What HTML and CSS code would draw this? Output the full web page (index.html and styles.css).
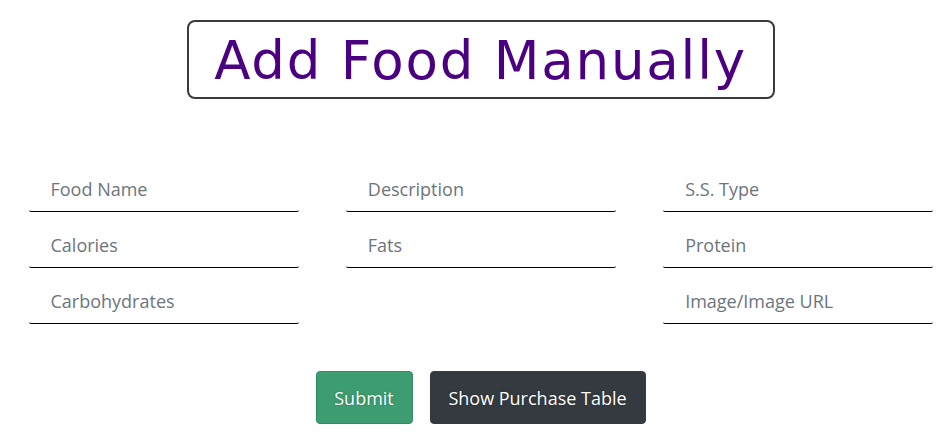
FILE: index.html
```html
<!DOCTYPE html>
<html>
<head>
<meta charset="utf-8">
<link rel="stylesheet" href="styles.css">
</head>
<body>
<div class="page">
  <div class="title-wrap">
    <h1 class="title">Add Food Manually</h1>
  </div>
  <form class="form">
    <div class="grid">
      <div class="cell"><input class="field" placeholder="Food Name"></div>
      <div class="cell"><input class="field" placeholder="Description"></div>
      <div class="cell"><input class="field" placeholder="S.S. Type"></div>
      <div class="cell"><input class="field" placeholder="Calories"></div>
      <div class="cell"><input class="field" placeholder="Fats"></div>
      <div class="cell"><input class="field" placeholder="Protein"></div>
      <div class="cell"><input class="field" placeholder="Carbohydrates"></div>
      <div class="cell"></div>
      <div class="cell"><input class="field" placeholder="Image/Image URL"></div>
    </div>
    <div class="actions">
      <button type="button" class="btn btn-green">Submit</button>
      <button type="button" class="btn btn-dark">Show Purchase Table</button>
    </div>
  </form>
</div>
</body>
</html>
```
FILE: styles.css
```css
html, body {
  margin: 0;
  padding: 0;
  background: #ffffff;
}
body {
  font-family: "Open Sans", "Liberation Sans", sans-serif;
}
.page {
  width: 952px;
  height: 444px;
  overflow: hidden;
}
.title-wrap {
  display: flex;
  justify-content: center;
  padding-top: 20px;
  padding-left: 9px;
}
.title {
  margin: 0;
  box-sizing: border-box;
  width: 588px;
  height: 79px;
  padding-top: 3px;
  border: 2px solid #3a3a3a;
  border-radius: 8px;
  color: #4b0082;
  font-family: "DejaVu Sans", sans-serif;
  font-weight: 400;
  font-size: 53px;
  line-height: 72px;
  text-align: center;
  letter-spacing: 1.8px;
  white-space: nowrap;
}
.form {
  margin: 0;
  padding-top: 60px;
}
.grid {
  display: grid;
  grid-template-columns: 1fr 1fr 1fr;
  row-gap: 0;
}
.cell {
  height: 56px;
  padding-left: 28.5px;
}
.field {
  box-sizing: border-box;
  width: 270px;
  height: 53px;
  margin-top: 0;
  border: none;
  border-bottom: 1.5px solid #000;
  border-radius: 2px;
  padding: 7px 0 0 22px;
  font-family: "Open Sans", sans-serif;
  font-size: 18px;
  color: #495057;
  background: transparent;
  outline: none;
}
.field::placeholder {
  color: #6c757d;
  opacity: 1;
}
.actions {
  display: flex;
  justify-content: center;
  gap: 17px;
  padding-left: 9px;
  margin-top: 44px;
}
.btn {
  box-sizing: border-box;
  height: 53px;
  padding: 0;
  border-radius: 4px;
  font-family: "Open Sans", sans-serif;
  font-size: 18px;
  color: #fff;
  text-shadow: 0 0 2px rgba(0,0,0,0.35);
  white-space: nowrap;
  display: flex;
  align-items: center;
  justify-content: center;
  cursor: pointer;
}
.btn-green {
  width: 97px;
  background: #3e9d70;
  border: 1px solid #2f8a5e;
}
.btn-dark {
  width: 216px;
  background: #343a40;
  border: 1px solid #343a40;
}
```
